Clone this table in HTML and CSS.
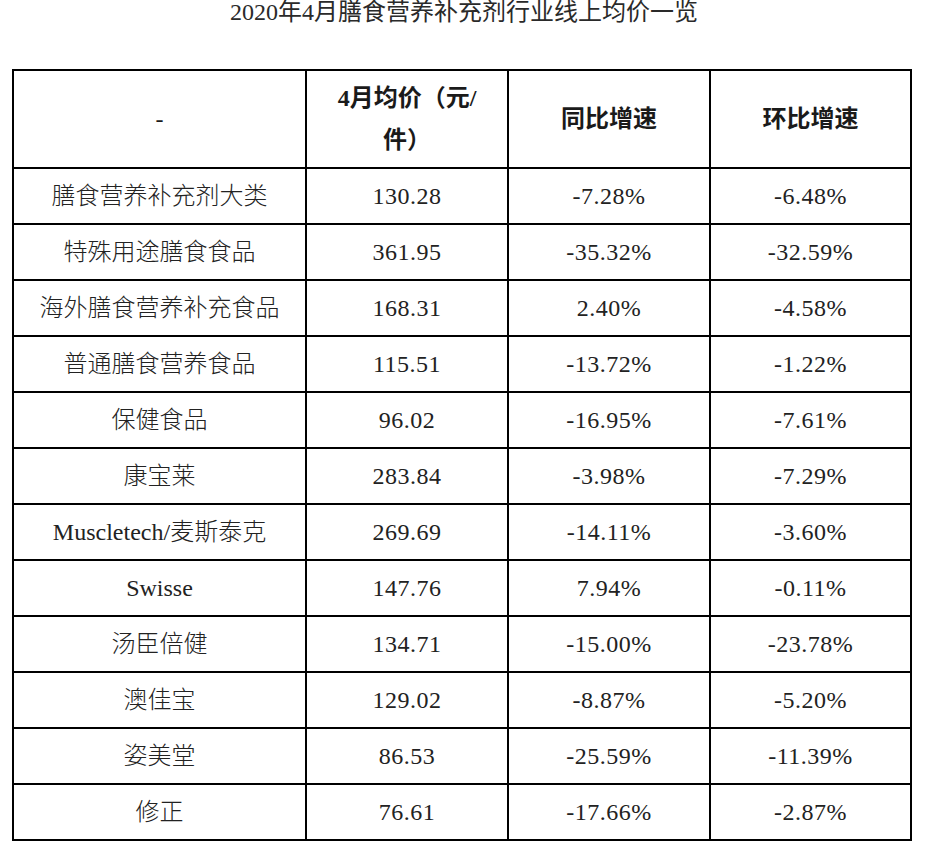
FILE: index.html
```html
<!DOCTYPE html>
<html lang="zh-CN">
<head>
<meta charset="utf-8">
<title>2020年4月膳食营养补充剂行业线上均价一览</title>
<link rel="stylesheet" href="styles.css">
</head>
<body>
<h1 class="title">2020年4月膳食营养补充剂行业线上均价一览</h1>
<table class="price-table">
  <colgroup>
    <col class="c1"><col class="c2"><col class="c3"><col class="c4">
  </colgroup>
  <thead>
    <tr>
      <th class="dash">-</th>
      <th>4月均价（元/<br>件）</th>
      <th>同比增速</th>
      <th>环比增速</th>
    </tr>
  </thead>
  <tbody>
    <tr><td>膳食营养补充剂大类</td><td>130.28</td><td>-7.28%</td><td>-6.48%</td></tr>
    <tr><td>特殊用途膳食食品</td><td>361.95</td><td>-35.32%</td><td>-32.59%</td></tr>
    <tr><td>海外膳食营养补充食品</td><td>168.31</td><td>2.40%</td><td>-4.58%</td></tr>
    <tr><td>普通膳食营养食品</td><td>115.51</td><td>-13.72%</td><td>-1.22%</td></tr>
    <tr><td>保健食品</td><td>96.02</td><td>-16.95%</td><td>-7.61%</td></tr>
    <tr><td>康宝莱</td><td>283.84</td><td>-3.98%</td><td>-7.29%</td></tr>
    <tr><td>Muscletech/麦斯泰克</td><td>269.69</td><td>-14.11%</td><td>-3.60%</td></tr>
    <tr><td>Swisse</td><td>147.76</td><td>7.94%</td><td>-0.11%</td></tr>
    <tr><td>汤臣倍健</td><td>134.71</td><td>-15.00%</td><td>-23.78%</td></tr>
    <tr><td>澳佳宝</td><td>129.02</td><td>-8.87%</td><td>-5.20%</td></tr>
    <tr><td>姿美堂</td><td>86.53</td><td>-25.59%</td><td>-11.39%</td></tr>
    <tr><td>修正</td><td>76.61</td><td>-17.66%</td><td>-2.87%</td></tr>
  </tbody>
</table>
</body>
</html>
```

FILE: styles.css
```css
html, body {
  margin: 0;
  padding: 0;
  background: #ffffff;
}

body {
  font-family: "Liberation Serif", "Noto Sans CJK SC", serif;
  color: #222222;
  font-size: 24px;
}

.title {
  margin: 0;
  padding: 0 0 0 2px;
  font-size: 24px;
  line-height: 24px;
  font-weight: normal;
  text-align: center;
  color: #2a2a2a;
  height: 69px;
  box-sizing: border-box;
}

.price-table {
  margin-left: 12px;
  width: 900px;
  table-layout: fixed;
  border-collapse: separate;
  border-spacing: 2px;
  background: #000000;
}

.c1 { width: 291px; }
.c2 { width: 200px; }
.c3 { width: 200px; }
.c4 { width: 199px; }

.price-table th,
.price-table td {
  background: #ffffff;
  padding: 0;
  text-align: center;
  vertical-align: middle;
  font-size: 24px;
  line-height: 28px;
  font-weight: 300;
}

.price-table th {
  height: 96px;
  font-weight: bold;
  line-height: 42px;
  color: #1a1a1a;
}

.price-table th.dash {
  font-weight: normal;
}

.price-table td {
  height: 54px;
}

.price-table td + td {
  letter-spacing: 0.5px;
}
```
